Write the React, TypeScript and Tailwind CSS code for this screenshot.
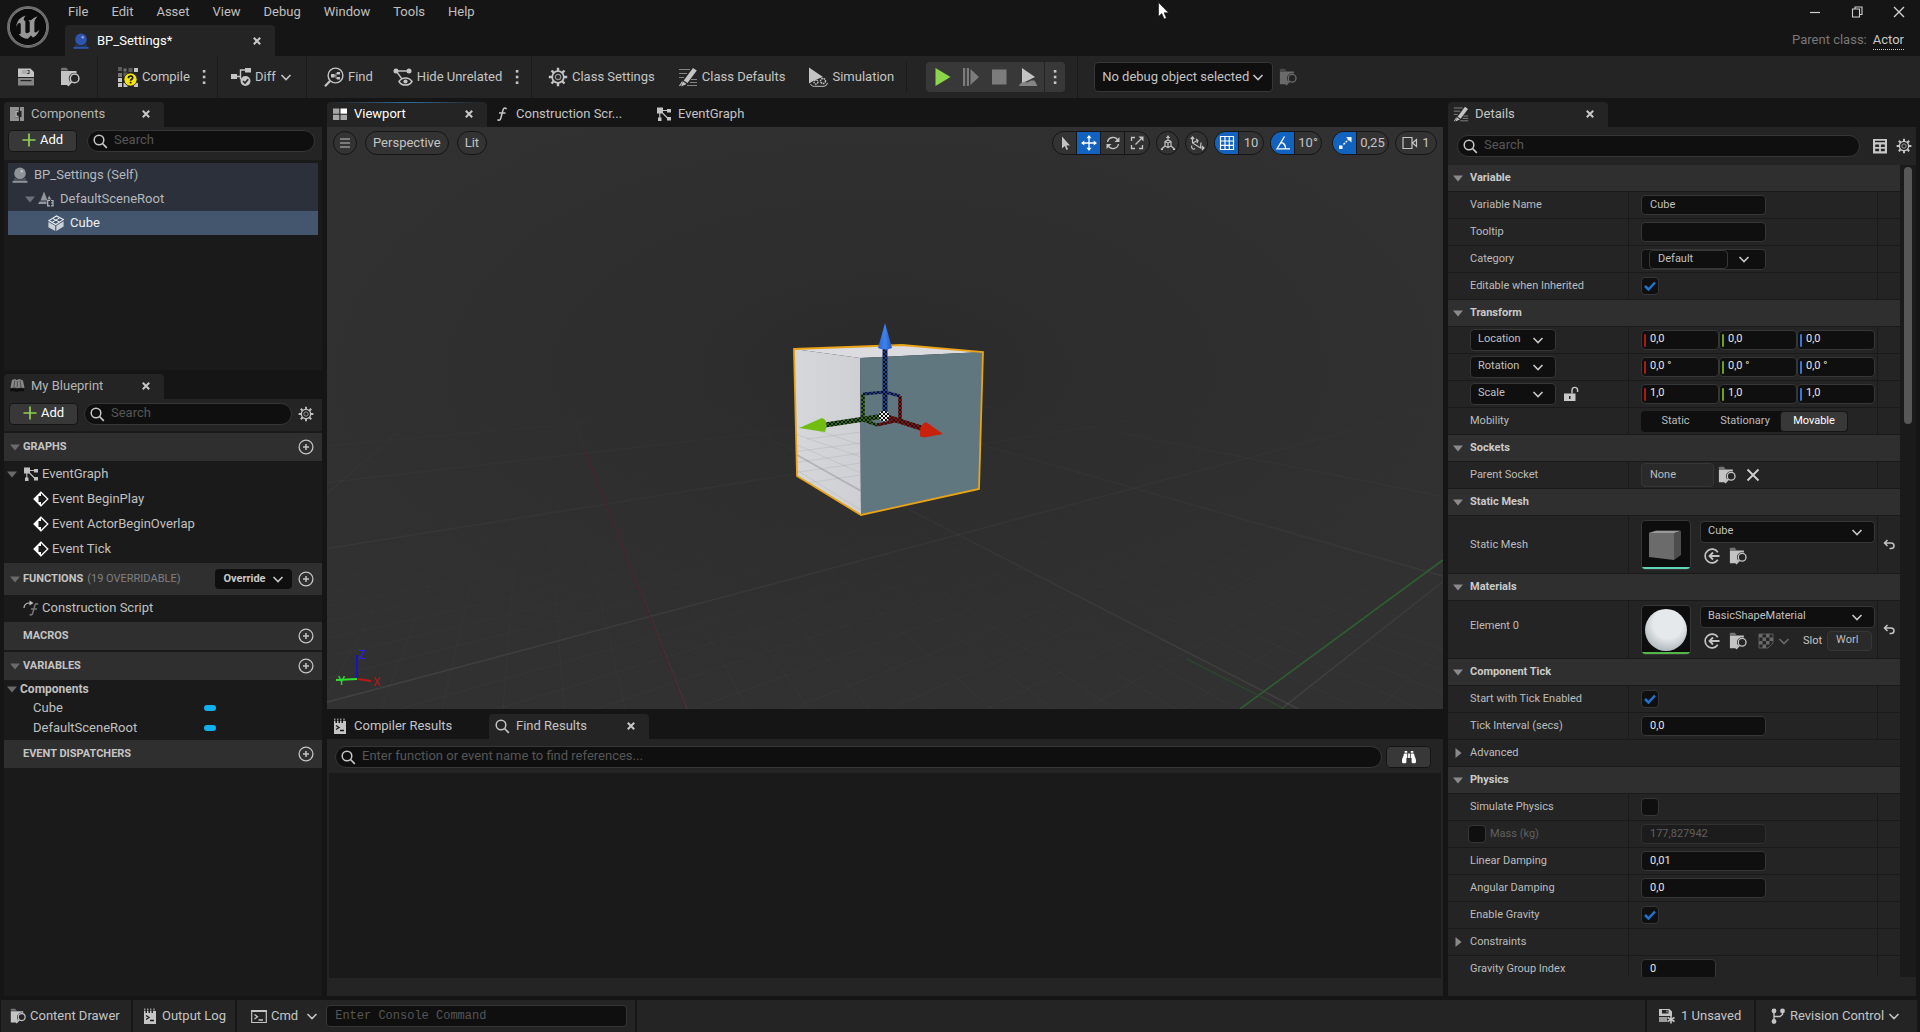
import React from "react";
import { SiUnrealengine } from "react-icons/si";
import { FaBinoculars } from "react-icons/fa";

type IconProps = { className?: string };

function Svg({ className = "size-5", box = 20, children }: { className?: string; box?: number; children: React.ReactNode }) {
  return (
    <svg viewBox={`0 0 ${box} ${box}`} className={`shrink-0 ${className}`} fill="currentColor" aria-hidden="true">
      {children}
    </svg>
  );
}

const stroke = { fill: "none", stroke: "currentColor" } as const;

const Chevron = ({ className = "size-3" }: IconProps) => (
  <Svg box={12} className={className}>
    <path d="M1.500 4L6 8.500 10.500 4" {...stroke} strokeWidth="1.600" />
  </Svg>
);
const Dots = ({ className = "size-5" }: IconProps) => (
  <Svg className={className}>
    <rect x="8.8" y="3" width="2.6" height="2.6" />
    <rect x="8.8" y="8.7" width="2.6" height="2.6" />
    <rect x="8.8" y="14.4" width="2.6" height="2.6" />
  </Svg>
);
const Cross = ({ className = "size-2.5" }: IconProps) => (
  <Svg box={10} className={className}>
    <path d="M1.8 1.8l6.4 6.4M8.2 1.8L1.8 8.2" {...stroke} strokeWidth="2" />
  </Svg>
);
const ThinCross = ({ className = "size-4" }: IconProps) => (
  <Svg box={16} className={className}>
    <path d="M2.500 2.500l11 11M13.500 2.500l-11 11" {...stroke} strokeWidth="1.800" />
  </Svg>
);
const Lens = ({ className = "size-4" }: IconProps) => (
  <Svg box={16} className={className}>
    <circle cx="7" cy="7" r="4.8" {...stroke} strokeWidth="1.5" />
    <path d="M10.5 10.5l4.3 4.3" {...stroke} strokeWidth="1.7" />
  </Svg>
);
const Save = ({ className = "size-5" }: IconProps) => (
  <Svg className={className}>
    <path fillRule="evenodd" d="M2 1.5h12.5L18 5v5H2zM6 3v4h7.5V3zM11 3.6h1.6v2.6H11z" />
    <path d="M6 3h5v4H6z" opacity=".85" />
    <path d="M2 11h16v7.5H2z" opacity=".6" />
    <path d="M4.5 13h11v1.2h-11z" fill="#242424" />
  </Svg>
);
const Browse = ({ className = "size-5" }: IconProps) => (
  <Svg className={className}>
    <path d="M1 1.500C1 1 2 .8 3 .8h3.500L8.500 3.500H1z" opacity=".5" />
    <path d="M1 4h15.5v2.200a5.600 5.600 0 0 0-6.400 8.700L8 18H1z" />
    <circle cx="14.600" cy="11.400" r="4.300" {...stroke} strokeWidth="1.500" />
    <path d="M11.600 14.600L7.800 18.800" {...stroke} strokeWidth="1.800" />
  </Svg>
);
const Compile = ({ className = "size-5" }: IconProps) => (
  <Svg className={className}>
    <path d="M0 0h4v4H0zM5.5 5.500h4v4h-4zM10.500 1h4v4h-4z" opacity=".35" />
    <path d="M0 6h4v4H0zM5.500 1.500h3v3h-3z" opacity=".5" />
    <path d="M16 1h4v4h-4zM0 11h4v4H0zM0 16h4v4H0zM5.500 16h4v4h-4zM16 16h4v4h-4z" />
    <circle cx="12.500" cy="12.500" r="6.600" fill="#f4e409" stroke="#1a1a1a" strokeWidth=".8" />
    <path d="M10.400 11.200c0-2.900 4.300-2.900 4.300-.4 0 1.500-2.100 1.500-2.100 3" fill="none" stroke="#1a1a1a" strokeWidth="1.700" />
    <path d="M11.700 14.800h1.800v1.600h-1.800z" fill="#1a1a1a" />
  </Svg>
);
const Diff = ({ className = "size-5" }: IconProps) => (
  <Svg className={className}>
    <path d="M0 7h6v5H0zM14 1h6v4.500h-6z" />
    <path d="M6 9.500h3.500V3H14M9.500 9.500v3" {...stroke} strokeWidth="1.400" />
    <circle cx="14.500" cy="14" r="5" />
    <path d="M12 14l2 2 3.200-3.800" fill="none" stroke="#242424" strokeWidth="1.600" />
  </Svg>
);
const Find = ({ className = "size-5" }: IconProps) => (
  <Svg className={className}>
    <circle cx="11.500" cy="8.500" r="7.400" {...stroke} strokeWidth="1.400" />
    <path d="M6 14L1 19.200" {...stroke} strokeWidth="2.200" />
    <path d="M7 7h3.500v3.500H7zM13 5h3v2.600h-3zM13 10h3v2.600h-3z" />
    <path d="M10 8.800h2V6.300h1.500M12 8.800v2.500h1.500" {...stroke} strokeWidth=".8" />
  </Svg>
);
const HideUnrelated = ({ className = "size-5" }: IconProps) => (
  <Svg className={className}>
    <circle cx="3" cy="4" r="2.500" />
    <circle cx="16" cy="4" r="2.500" />
    <path d="M3 4h13M3.500 4.500L9 12" {...stroke} strokeWidth="1.300" />
    <path d="M6 14.500c3-4.800 10-4.800 13 0-3 4.800-10 4.800-13 0z" {...stroke} strokeWidth="1.500" />
    <circle cx="12.500" cy="14.500" r="2.100" />
  </Svg>
);
const Gear = ({ className = "size-5" }: IconProps) => (
  <Svg className={className}>
    <circle cx="10" cy="10" r="5.800" {...stroke} strokeWidth="1.700" />
    <circle cx="10" cy="10" r="2.700" {...stroke} strokeWidth="1.200" opacity=".7" />
    <path
      d="M10 .8v3.400M10 15.800v3.400M.8 10h3.400M15.800 10h3.400M3.500 3.500l2.400 2.400M14.100 14.100l2.400 2.400M16.500 3.500l-2.400 2.400M5.900 14.100l-2.400 2.400"
      {...stroke}
      strokeWidth="2.400"
    />
  </Svg>
);
const Pencil = ({ className = "size-5" }: IconProps) => (
  <Svg className={className}>
    <path d="M1 2.500h11M1 6.500h8M1 10.500h5M13 12.500h6M12 15.500h7M9 18.500h10" {...stroke} strokeWidth="1.200" opacity=".6" />
    <path d="M15 1l3.800 2.600L9.500 16 5.700 13.400z" />
    <path d="M5 14.500l3.600 2.500L3 19.500z" />
    <path d="M4.500 14.500L1.500 19" {...stroke} strokeWidth="1.200" />
  </Svg>
);
const Simulation = ({ className = "size-5" }: IconProps) => (
  <Svg className={className}>
    <path d="M1 .5l14 9.500-4 1.500-5 2-5 3z" />
    <circle cx="8" cy="15" r="2" {...stroke} strokeWidth="1.400" strokeDasharray="1.500 .7" />
    <circle cx="15" cy="14" r="2.500" {...stroke} strokeWidth="1.500" strokeDasharray="1.700 .7" />
    <path d="M2.500 17c1 2 2 2.300 4 2.300h9.500a4 4 0 0 0 3.500-3.500" {...stroke} strokeWidth="1" />
  </Svg>
);
const Sphere = ({ className = "size-4", color = "currentColor" }: IconProps & { color?: string }) => (
  <Svg box={16} className={className}>
    <g fill={color}>
      <circle cx="8" cy="6.400" r="5.800" />
      <path d="M3 10.500c2 3 8 3 10 0l2 4.500H1z" fillOpacity=".4" />
      <path d="M.5 14h15v1.800H.5z" />
    </g>
    <circle cx="9.800" cy="4.300" r="1.300" fill="#fff" opacity=".45" />
  </Svg>
);
const ComponentsIcon = ({ className = "size-4" }: IconProps) => (
  <Svg box={16} className={className}>
    <path d="M1 1h9v3.500H6.500v7H10V15H1zM11 1h4v14h-4v-4h1.500V5H11z" opacity=".75" />
    <path d="M9.500 5.500H7v5h2.500" fill="none" stroke="currentColor" strokeWidth="1.500" />
  </Svg>
);
const ViewportIcon = ({ className = "size-4" }: IconProps) => (
  <Svg box={16} className={className}>
    <path d="M1 2.500h6.300v5.200H1zM1 8.700h6.300v5.200H1zM8.500 8.700H15v5.200H8.500z" opacity=".6" />
    <path d="M8.500 2.500H15v5.200H8.500z" fill="#fff" />
  </Svg>
);
const FunctionIcon = ({ className = "size-4" }: IconProps) => (
  <Svg box={16} className={className}>
    <path d="M12.500 3.200C11.800 1.400 9.600 1.700 9 4L6.800 12.300c-.5 2-2.300 2.600-3.300 1.200M5 7h6.500" {...stroke} strokeWidth="1.500" />
  </Svg>
);
const OverrideFunction = ({ className = "size-4" }: IconProps) => (
  <Svg box={16} className={className}>
    <path d="M1 8c0-4 2-5 6-5" {...stroke} strokeWidth="1.200" />
    <path d="M6.500.5L10.500 3 6.500 5.500z" />
    <path d="M15 4.500c-1-1.300-2.700-.9-3.200 1L9.800 13c-.4 1.900-2 2.500-3.200 1.300M8 9h6" {...stroke} strokeWidth="1.500" opacity=".55" />
  </Svg>
);
const GraphIcon = ({ className = "size-4" }: IconProps) => (
  <Svg box={16} className={className}>
    <path d="M1 1.500h6v6H1zM11 3h4v3.500h-4zM11 11h4v3.500h-4zM2 11.500h3.500V15H2z" />
    <path d="M7 4.500h4M6.500 7l5.500 5.500M3.800 7v5" {...stroke} strokeWidth="1.100" />
  </Svg>
);
const BookIcon = ({ className = "size-4" }: IconProps) => (
  <Svg box={16} className={className}>
    <path d="M1.500 10L3 2l3-1 1.500 1 3-1L14 2.500 15.500 10l-3.700-.6-3 .6-3.300-.6z" opacity=".7" />
    <path d="M5.700 2.500L5 9M8.300 3v6M11 2.500l1 6.500" fill="none" stroke="#242424" strokeWidth=".6" />
    <path d="M1 11l4-.6 3 .8 3-.8 4 .6v2.200H9l-1 1H6.500l-.7-1H1z" fill="#0d0d0d" />
  </Svg>
);
const SceneRoot = ({ className = "size-4" }: IconProps) => (
  <Svg box={16} className={className}>
    <path d="M6 .5L9.500 9.500h-7zM0 13h8.500v-2.500h-7zM11 4.500L13.500 8.500h-4z" opacity=".75" />
    <path d="M12 9.500H9.700v5.300H12M13 9.500h2v5.300h-2M13 12h2" {...stroke} strokeWidth="1.200" />
  </Svg>
);
const MeshIcon = ({ className = "size-4" }: IconProps) => (
  <Svg box={16} className={className}>
    <path d="M.8 5.600L8.500 1l6.900 3.600L7.700 9.500z" {...stroke} strokeWidth="1.100" />
    <path d="M4.500 3.400l7 3.700M11.800 2.800L4 7.400" {...stroke} strokeWidth="1" />
    <path d="M.4 7l6.800 3.800V16L.4 12.200zM8.300 10.800l7.300-4.600v5.200L8.300 16z" opacity=".8" />
  </Svg>
);
const EventIcon = ({ className = "size-4" }: IconProps) => (
  <Svg box={16} className={className}>
    <path d="M8 1.200L14.800 8 8 14.800 1.200 8z" {...stroke} strokeWidth="1.300" />
    <path d="M8 .5L.5 8 8 15.500V11H5.500V5H8z" />
    <path d="M8 5l3.200 3L8 11z" fill="#1a1a1a" />
  </Svg>
);
const CirclePlus = ({ className = "size-4" }: IconProps) => (
  <Svg box={16} className={className}>
    <circle cx="8" cy="8" r="6.900" {...stroke} strokeWidth="1.300" />
    <path d="M8 5v6M5 8h6" {...stroke} strokeWidth="1.500" />
  </Svg>
);
const LogIcon = ({ className = "size-4" }: IconProps) => (
  <Svg box={16} className={className}>
    <path d="M2 3h1.500v2H5V3h1.500v2H8V3h1.500v2H11V3h3v13H2z" />
    <path d="M2.800.5v2M5.800.5v2M8.800.5v2M12 .5v2" {...stroke} strokeWidth="1" />
    <path d="M4 7.500l3 2-3 2M8 12.500h4" fill="none" stroke="#1a1a1a" strokeWidth="1.300" />
  </Svg>
);
const CmdIcon = ({ className = "size-4" }: IconProps) => (
  <Svg box={16} className={className}>
    <path d="M.7 2.500h14.600v12H.7z" {...stroke} strokeWidth="1.200" />
    <path d="M.5 2h15v2H.5z" />
    <path d="M3.500 6.500l3 2.200-3 2.200M7.500 12h4.500" {...stroke} strokeWidth="1.300" />
  </Svg>
);
const UnsavedIcon = ({ className = "size-4" }: IconProps) => (
  <Svg box={16} className={className}>
    <path fillRule="evenodd" d="M0 1h10.500L13 3.500V8H0zM3 2v3.500h6.500V2zM7.500 2.500h1v2h-1z" />
    <path d="M0 9h8v5H0z" opacity=".75" />
    <path d="M12 7.500v8M8.500 9.500l7 4M15.500 9.500l-7 4" {...stroke} strokeWidth="1.600" />
  </Svg>
);
const BranchIcon = ({ className = "size-4" }: IconProps) => (
  <Svg box={16} className={className}>
    <circle cx="4" cy="3" r="2.400" />
    <circle cx="4" cy="13.500" r="2.400" />
    <circle cx="12.500" cy="3" r="2.400" />
    <path d="M4 3v10M12.500 3v3.500L10 8.500H4" {...stroke} strokeWidth="1.400" />
  </Svg>
);
const UseAsset = ({ className = "size-4" }: IconProps) => (
  <Svg box={16} className={className}>
    <path d="M13.800 4.200A6.900 6.900 0 1 0 13.800 11.800" {...stroke} strokeWidth="1.700" />
    <path d="M15.500 8H6M9 4.500L5.500 8 9 11.500" {...stroke} strokeWidth="1.800" />
  </Svg>
);
const ResetArrow = ({ className = "size-3" }: IconProps) => (
  <Svg box={12} className={className}>
    <path d="M4.500 1L1.500 4l3 3M1.500 4H8c4 0 4 5.500 0 5.500H6.500" {...stroke} strokeWidth="1.500" />
  </Svg>
);
const Unlock = ({ className = "size-4" }: IconProps) => (
  <Svg box={16} className={className}>
    <path fillRule="evenodd" d="M1 7.500h11.500V15H1zM6 10v3h1.500v-3z" />
    <path d="M9 7.500V4.200a2.800 2.800 0 0 1 5.600 0V6" {...stroke} strokeWidth="1.400" />
  </Svg>
);
const TableIcon = ({ className = "size-4" }: IconProps) => (
  <Svg box={16} className={className}>
    <path fillRule="evenodd" d="M1 1h14v14.500H1zM3 2.800v1.400h10V2.800zM3.200 6.500V9h3.900V6.500zM8.900 6.500V9h3.900V6.500zM3.200 10.800v2.500h3.900v-2.500zM8.900 10.800v2.500h3.900v-2.500z" />
  </Svg>
);
const CheckerIcon = ({ className = "size-4" }: IconProps) => (
  <Svg box={16} className={className}>
    <path d="M1 1h3.500v3.500H1zM8 1h3.500v3.500H8zM4.500 4.500H8V8H4.500zM11.500 4.500H15V8h-3.500zM1 8h3.500v3.500H1zM8 8h3.500v3.500H8zM4.500 11.500H8V15H4.500z" />
    <path d="M1 1h14v9l-5 5H1z" {...stroke} strokeWidth=".8" />
  </Svg>
);

const TriDown = ({ className = "text-[#8a8a8a]" }: IconProps) => (
  <Svg box={10} className={`size-2.5 ${className}`}>
    <path d="M0 2.500h10L5 8.500z" />
  </Svg>
);
const TriRight = () => (
  <Svg box={10} className="size-2.5 text-[#8a8a8a]">
    <path d="M2.500 0v10l6-5z" />
  </Svg>
);

function Tab({ icon, label, active, closable, glow, dim }: { icon: React.ReactNode; label: string; active?: boolean; closable?: boolean; glow?: boolean; dim?: boolean }) {
  return (
    <div
      className={`relative flex h-[25px] w-40 shrink-0 items-center pb-0.5 pl-[5px] pr-[13px] ${active ? "rounded-t bg-[#242424]" : ""} ${
        dim ? "text-[#b4b4b4]" : glow ? "text-white" : "text-[#c4c4c4]"
      }`}
    >
      {glow && <span className="absolute inset-x-2 top-0 h-px bg-linear-to-r from-transparent via-[#2f6f9f] to-transparent" />}
      <button type="button" className="flex min-w-0 flex-1 items-center gap-1.5 text-left">
        {icon}
        <span className="truncate">{label}</span>
      </button>
      {closable && (
        <button type="button" aria-label={`Close ${label}`} className="text-[#c8c8c8]">
          <Cross />
        </button>
      )}
    </div>
  );
}

function SearchBox({ placeholder, className = "" }: { placeholder: string; className?: string }) {
  return (
    <label className={`flex h-[22px] min-w-0 flex-1 items-center gap-1.5 rounded-full border border-[#363636] bg-[#0f0f0f] pl-1 text-[#c8c8c8] ${className}`}>
      <Lens />
      <input aria-label={placeholder} placeholder={placeholder} className="min-w-0 flex-1 bg-transparent pb-0.5 text-[13px] outline-none placeholder:text-[#565656]" />
    </label>
  );
}

function AddButton() {
  return (
    <button type="button" className="flex h-[22px] w-[69px] shrink-0 items-center justify-center gap-1 rounded border border-[#151515] bg-[#383838] pb-0.5 text-white">
      <Svg box={14} className="size-3.5 text-[#8fd14f]">
        <path d="M7 .5v13M.5 7h13" {...stroke} strokeWidth="1.700" />
      </Svg>
      Add
    </button>
  );
}

function ComponentsPanel() {
  return (
    <section className="flex h-[268px] shrink-0 flex-col">
      <div className="flex">
        <Tab icon={<ComponentsIcon />} label="Components" active closable dim />
      </div>
      <div className="flex h-[33px] items-start gap-2.5 bg-[#242424] pl-1 pt-[3px] pr-[7px]">
        <AddButton />
        <SearchBox placeholder="Search" />
      </div>
      <div className="flex-1 bg-[#1a1a1a] px-1 pt-[3px] text-[#b4b8be]">
        <div className="flex h-6 items-center gap-1.5 bg-[#2b303a] pl-1">
          <Sphere color="#8e9299" />
          BP_Settings (Self)
        </div>
        <div className="flex h-6 items-center bg-[#2b303a] pl-[17px]">
          <TriDown className="text-[#6a6f78]" />
          <SceneRoot className="ml-[3px] mr-1.5 size-4" />
          DefaultSceneRoot
        </div>
        <div className="flex h-6 items-center gap-1.5 bg-[#43566d] pl-10 text-[#eef0f2]">
          <MeshIcon />
          Cube
        </div>
      </div>
    </section>
  );
}

function BlueprintHeader({ label, suffix, arrow, children, className = "h-7" }: { label: string; suffix?: string; arrow?: boolean; children?: React.ReactNode; className?: string }) {
  return (
    <div className={`flex items-center bg-[#2f2f2f] pl-1.5 pr-2 text-[11px] ${className}`}>
      <span className="w-[13px]">{arrow && <TriDown className="text-[#6a6a6a]" />}</span>
      <span className="font-bold text-[#c4c4c4]">{label}</span>
      {suffix && <span className="ml-1 text-[#808080]">{suffix}</span>}
      <span className="flex-1" />
      {children}
      <button type="button" aria-label={`Add to ${label}`} className="ml-1.5 text-[#c4c4c4]">
        <CirclePlus />
      </button>
    </div>
  );
}

function MyBlueprintPanel() {
  return (
    <section className="mt-1 flex min-h-0 flex-1 flex-col bg-[#1a1a1a] text-[#c0c0c0]">
      <div className="flex bg-[#151515]">
        <Tab icon={<BookIcon />} label="My Blueprint" active closable dim />
      </div>
      <div className="flex h-8 items-start gap-1.5 bg-[#242424] pl-[5px] pr-2 pt-1">
        <AddButton />
        <SearchBox placeholder="Search" />
        <button type="button" aria-label="View options" className="mt-[3px]">
          <Gear className="size-4" />
        </button>
      </div>
      <div className="mt-0.5">
        <BlueprintHeader label="GRAPHS" arrow />
        <div className="flex h-[25px] items-center pl-[3px]">
          <TriDown className="text-[#6a6a6a]" />
          <GraphIcon className="ml-1.5 mr-[3px] size-4" />
          EventGraph
        </div>
        {["Event BeginPlay", "Event ActorBeginOverlap", "Event Tick"].map((e) => (
          <div key={e} className="flex h-[25px] items-center gap-[3px] pl-[29px]">
            <EventIcon className="size-4 text-white" />
            {e}
          </div>
        ))}
        <BlueprintHeader label="FUNCTIONS" suffix="(19 OVERRIDABLE)" arrow className="mt-0.5 h-8">
          <button type="button" className="flex h-5 w-[77px] items-center justify-center gap-1.5 rounded bg-[#0f0f0f] font-bold text-[#c8c8c8]">
            Override
            <Chevron />
          </button>
        </BlueprintHeader>
        <div className="flex h-[27px] items-center gap-[3px] pb-0.5 pl-[19px]">
          <OverrideFunction />
          Construction Script
        </div>
        <BlueprintHeader label="MACROS" />
        <BlueprintHeader label="VARIABLES" arrow className="mt-0.5 h-7" />
        <div className="flex h-[19px] items-center gap-[3px] pb-0.5 pl-[3px] text-xs font-bold">
          <TriDown className="text-[#6a6a6a]" />
          Components
        </div>
        {["Cube", "DefaultSceneRoot"].map((v) => (
          <div key={v} className="flex h-5 items-center pb-0.5 pl-[29px]">
            <span className="w-[171px]">{v}</span>
            <span className="h-1.5 w-3 rounded-full bg-[#12b0ef]" />
          </div>
        ))}
        <BlueprintHeader label="EVENT DISPATCHERS" className="mt-px h-7" />
      </div>
    </section>
  );
}

/* Floor lines run towards two vanishing points; steps are horizontal shift per pixel of depth. */
const HORIZON = 190;
const floorLines = (vx: number, base: number, step: number, from: number, to: number) =>
  Array.from({ length: to - from }, (_, i) => {
    const k = from + i;
    return { key: k, x1: vx, x2: vx + (base + step * k) * 500, major: k % 10 === 0 };
  });

function Scene() {
  const lines = [...floorLines(206, 0.392, 0.156, -26, 40), ...floorLines(1452, -3.77, 0.25, -30, 16)];
  return (
    <svg className="absolute inset-0 size-full" viewBox="0 0 1116 582" preserveAspectRatio="xMidYMid slice" aria-label="3D preview">
      <defs>
        <radialGradient id="bg" cx="0.5" cy="0.42" r="0.6">
          <stop offset="0" stopColor="#2a2a2a" />
          <stop offset="0.35" stopColor="#2e2e2e" />
          <stop offset="1" stopColor="#313131" />
        </radialGradient>
        <linearGradient id="fade" x1="0" y1="0" x2="0" y2="1">
          <stop offset="0.42" stopColor="#000" />
          <stop offset="0.75" stopColor="#777" />
          <stop offset="1" stopColor="#fff" />
        </linearGradient>
        <linearGradient id="left" x1="0" y1="0" x2="1" y2="0">
          <stop offset="0" stopColor="#d6d7da" />
          <stop offset="1" stopColor="#cfd0d3" />
        </linearGradient>
        <linearGradient id="cone" x1="0" y1="0" x2="1" y2="0">
          <stop offset="0" stopColor="#2b66cf" />
          <stop offset="0.5" stopColor="#3f82ee" />
          <stop offset="1" stopColor="#2257b8" />
        </linearGradient>
        <mask id="floor">
          <rect width="1116" height="582" fill="url(#fade)" />
        </mask>
        <clipPath id="leftFace">
          <path d="M467 222L533 231L534 388L470 349z" />
        </clipPath>
        {[
          ["checkBlue", "#1d3f9c"],
          ["checkGreen", "#2f6b12"],
          ["checkRed", "#8f1010"],
          ["checkWhite", "#e8e8e8"],
        ].map(([id, color]) => (
          <pattern key={id} id={id} width="4" height="4" patternUnits="userSpaceOnUse">
            <rect width="4" height="4" fill="#101010" />
            <path d="M0 0h2v2H0zM2 2h2v2H2z" fill={color} />
          </pattern>
        ))}
      </defs>
      <rect width="1116" height="582" fill="url(#bg)" />
      <g mask="url(#floor)">
        {lines.map((l) => (
          <line key={`${l.x1}-${l.key}`} x1={l.x1} y1={HORIZON} x2={l.x2} y2={HORIZON + 500} stroke="#fff" strokeWidth={l.major ? 1.5 : 1} strokeOpacity={l.major ? 0.08 : 0.028} />
        ))}
      </g>
      <path d="M258 323L359 582" stroke="#4a2329" strokeWidth="1.200" />
      <path d="M1116 433L913 582" stroke="#2f5f30" strokeWidth="1.600" />
      <path d="M860 532L958 582" stroke="#2c4a2d" strokeWidth="1.200" />

      <path d="M467 222L575 218L656 225L533 231z" fill="#dcdce0" />
      <path d="M467 222L533 231L534 388L470 349z" fill="url(#left)" />
      <path d="M533 231L656 225L652 362L534 388z" fill="#61777f" />
      <g clipPath="url(#leftFace)" stroke="#9b9da0" strokeOpacity="0.25">
        <path d="M470 328L534 364" strokeWidth="1.600" strokeOpacity="0.6" />
        <path d="M468 317L534 346M468 307L534 330M480 300L534 318M468 342L534 383M466 346L534 336M466 336L534 326M466 325L534 316M466 358L534 348M480 312L534 305" />
      </g>
      <path d="M467 222L575 218L656 225L652 362L534 388L470 349z" fill="none" stroke="#e8a317" strokeWidth="1.800" />

      <g fill="none">
        <path d="M536 293V267" stroke="url(#checkGreen)" strokeWidth="3.500" />
        <path d="M573 293V269" stroke="url(#checkRed)" strokeWidth="3.500" />
        <path d="M536 267L558 265L573 269" stroke="url(#checkBlue)" strokeWidth="3" />
        <path d="M536 293L550 298" stroke="url(#checkGreen)" strokeWidth="3" />
        <path d="M550 298L573 293" stroke="url(#checkRed)" strokeWidth="3" />
        <path d="M558 289V221.500L558.100 220" stroke="url(#checkBlue)" strokeWidth="5" />
        <path d="M557 289L498 298" stroke="url(#checkGreen)" strokeWidth="5" />
        <path d="M557 289L597 302" stroke="url(#checkRed)" strokeWidth="5" />
      </g>
      <path d="M558 196L565 221Q558 224 551 221z" fill="url(#cone)" />
      <path d="M472 301L495 291Q502 293 498 305z" fill="#72bd12" />
      <path d="M616 307L599 295Q592 297 593 309Q595 311 600 310z" fill="#c9220c" />
      <circle cx="557" cy="289" r="5.500" fill="url(#checkWhite)" />

      <g fill="none" strokeWidth="1.800">
        <path d="M30 551V528" stroke="#1410d8" />
        <path d="M30 552L9 553" stroke="#30e030" />
        <path d="M31 552L44 554" stroke="#c01818" />
      </g>
      <g fontFamily="Roboto, sans-serif" fontSize="12">
        <text x="32" y="532" fill="#2420f0">Z</text>
        <text x="11" y="558" fill="#30e030">Y</text>
        <text x="46" y="559" fill="#b01818">X</text>
      </g>
    </svg>
  );
}

const pill = "flex h-6 shrink-0 items-center justify-center overflow-hidden rounded-full border border-[#151515] bg-[#333333] text-[#c4c4c4]";

function ViewportToolbar() {
  return (
    <div className="relative flex items-center gap-1.5 px-1.5 pt-1">
      <button type="button" aria-label="Viewport options" className={`${pill} w-6`}>
        <Svg box={12} className="size-3">
          <path d="M1 2h10M1 6h10M1 10h10" {...stroke} strokeWidth="1.100" />
        </Svg>
      </button>
      <button type="button" className={`${pill} ml-0.5 px-[7px]`}>Perspective</button>
      <button type="button" className={`${pill} ml-0.5 px-[7px]`}>Lit</button>
      <span className="flex-1" />
      <div className={`${pill} divide-x divide-[#151515]`}>
        <button type="button" aria-label="Select" className="flex h-6 w-6 items-center justify-center">
          <Svg box={16} className="size-4"><path d="M5 1.500v12l2.800-2.600L9.500 15l1.600-.8-1.700-3.800h3.600z" /></Svg>
        </button>
        <button type="button" aria-label="Translate" className="flex h-6 w-6 items-center justify-center bg-[#1262bf] text-white">
          <Svg box={16} className="size-4">
            <path d="M8 1.500v13M1.500 8h13" {...stroke} strokeWidth="1.300" />
            <path d="M8 0l2.500 3.300h-5zM8 16l2.500-3.300h-5zM0 8l3.300-2.500v5zM16 8l-3.300-2.500v5z" />
          </Svg>
        </button>
        <button type="button" aria-label="Rotate" className="flex h-6 w-6 items-center justify-center">
          <Svg box={16} className="size-4">
            <path d="M2.500 7A5.600 5.600 0 0 1 13 5.500M13.500 9A5.600 5.600 0 0 1 3 10.500" {...stroke} strokeWidth="1.300" />
            <path d="M14.500 2v5h-5zM1.500 14V9h5z" />
          </Svg>
        </button>
        <button type="button" aria-label="Scale" className="flex h-6 w-6 items-center justify-center">
          <Svg box={16} className="size-4">
            <path d="M2.500 6V2.500H6M13.500 10v3.500H10M2.500 10v3.500H6" {...stroke} strokeWidth="1.300" />
            <path d="M6.500 9.500L12 4" {...stroke} strokeWidth="1.300" />
            <path d="M9.500 1.500h5v5z" />
          </Svg>
        </button>
      </div>
      <button type="button" aria-label="World space" className={`${pill} w-[23px]`}>
        <Svg box={16} className="size-4">
          <path d="M8 .5V6M5 6.500l3-1.500 3 1.500v4.500l-3 1.500L5 11zM5 6.500L8 8l3-1.500M8 8v4.500M5 11l-4 3.500M11 11l4 3.500M8 1L6.500 3M8 1l1.500 2M1 14.500h2M15 14.500h-2" {...stroke} strokeWidth="1.200" />
        </Svg>
      </button>
      <button type="button" aria-label="Surface snapping" className={`${pill} w-[23px]`}>
        <Svg box={16} className="size-4">
          <path d="M3.500 2v6l8 5H15M3.500 8l5-2.500M11.500 13l.5-5.500M1.800 4L3.500 2l1.700 2M13 11l2 2-2 2M7 4l2 1.500L8 8" {...stroke} strokeWidth="1.200" />
          <path d="M3 10.500c-1.500 2 1 4.500 3 3" {...stroke} strokeWidth="1.200" />
        </Svg>
      </button>
      <div className={`${pill} divide-x divide-[#151515]`}>
        <button type="button" aria-label="Grid snapping" className="flex h-6 w-6 items-center justify-center bg-[#1262bf] text-white">
          <Svg box={16} className="size-4"><path d="M1.500 1.500h13v13h-13zM1.500 6h13M1.500 10.300h13M6 1.500v13M10.300 1.500v13" {...stroke} strokeWidth="1.200" /></Svg>
        </button>
        <button type="button" className="h-6 w-6">10</button>
      </div>
      <div className={`${pill} divide-x divide-[#151515]`}>
        <button type="button" aria-label="Rotation snapping" className="flex h-6 w-6 items-center justify-center bg-[#1262bf] text-white">
          <Svg box={16} className="size-4"><path d="M9.500 1.500L2 13.800h13M6 7.500c3 .5 4.500 3 4.500 6" {...stroke} strokeWidth="1.300" /></Svg>
        </button>
        <button type="button" className="h-6 w-[26px]">10°</button>
      </div>
      <div className={`${pill} ml-1 divide-x divide-[#151515]`}>
        <button type="button" aria-label="Scale snapping" className="flex h-6 w-6 items-center justify-center bg-[#1262bf] text-white">
          <Svg box={16} className="size-4">
            <path d="M2 10.500h3.500V14H2zM9 2h5.500v5.500z" />
            <path d="M6.500 9.500L12 4" {...stroke} strokeWidth="1.400" strokeDasharray="2 1" />
          </Svg>
        </button>
        <button type="button" className="h-6 w-[31px]">0,25</button>
      </div>
      <button type="button" aria-label="Camera speed" className={`${pill} w-[42px] gap-1`}>
        <Svg box={16} className="size-4"><path d="M1 2.500h9v11H1zM10.500 8l4-3.500v7z" {...stroke} strokeWidth="1.200" /></Svg>
        1
      </button>
    </div>
  );
}

function CenterColumn() {
  return (
    <main className="flex min-w-0 flex-1 flex-col">
      <div className="flex gap-0.5">
        <Tab icon={<ViewportIcon />} label="Viewport" active closable glow />
        <Tab icon={<FunctionIcon />} label="Construction Scr..." />
        <Tab icon={<GraphIcon />} label="EventGraph" />
      </div>
      <div className="relative min-h-0 flex-1 overflow-hidden bg-[#303030]">
        <Scene />
        <ViewportToolbar />
      </div>
      <div className="mt-[5px] flex gap-0.5">
        <Tab icon={<LogIcon />} label="Compiler Results" />
        <Tab icon={<Lens />} label="Find Results" active closable />
      </div>
      <section className="flex h-[257px] flex-col bg-[#242424]">
        <div className="flex items-center gap-1 pb-[5px] pl-2 pr-3 pt-[7px]">
          <SearchBox placeholder="Enter function or event name to find references..." />
          <button type="button" aria-label="Find in all blueprints" className="flex h-[22px] w-[45px] items-center justify-center rounded border border-[#151515] bg-[#383838] text-white">
            <FaBinoculars className="size-3.5" />
          </button>
        </div>
        <div className="mx-0.5 mb-[18px] flex-1 bg-[#1a1a1a]" />
      </section>
    </main>
  );
}

function Category({ label }: { label: string }) {
  return (
    <h3 className="flex h-[27px] items-center gap-[7px] border-b border-[#1a1a1a] bg-[#2f2f2f] pl-[5px] font-bold text-[#cacaca]">
      <TriDown />
      {label}
    </h3>
  );
}

function Row({ label, arrow, plain, tall, dim, reset, children, id }: {
  label: React.ReactNode; arrow?: boolean; plain?: boolean; tall?: boolean; dim?: boolean; reset?: boolean; children?: React.ReactNode; id?: string;
}) {
  return (
    <div className={`grid grid-cols-[180px_1fr_23px] border-b border-[#1a1a1a] bg-[#242424] ${tall ? "h-[58px]" : "h-[27px]"}`}>
      <div className="flex items-center pl-[5px]">
        <span className="w-[17px] shrink-0">{arrow && <TriRight />}</span>
        {typeof label === "string" ? <label htmlFor={id} className={dim ? "text-[#606060]" : "text-[#bcbcbc]"}>{label}</label> : label}
      </div>
      <div className={`flex items-center pl-3 ${plain ? "" : "border-l border-[#1a1a1a]"}`}>{children}</div>
      <div className={`flex items-center justify-center text-[#c4c4c4] ${plain ? "" : "border-l border-[#1a1a1a]"}`}>
        {reset && <button type="button" aria-label="Reset to default"><ResetArrow /></button>}
      </div>
    </div>
  );
}

function Field({ id, value = "", className = "w-[125px] text-[#c0c0c0]", disabled }: { id: string; value?: string; className?: string; disabled?: boolean }) {
  return (
    <input
      id={id}
      defaultValue={value}
      disabled={disabled}
      className={`h-5 rounded border px-2 pb-0.5 outline-none ${disabled ? "border-[#303030] bg-[#1c1c1c]" : "border-[#363636] bg-[#0f0f0f]"} ${className}`}
    />
  );
}

function Check({ id, checked, label }: { id: string; checked?: boolean; label?: string }) {
  return (
    <span className="relative flex size-[18px] shrink-0">
      <input id={id} type="checkbox" defaultChecked={checked} aria-label={label} className="peer size-[18px] appearance-none rounded-sm border border-[#363636] bg-[#0f0f0f]" />
      <Svg box={16} className="pointer-events-none absolute inset-px hidden size-4 text-[#1e74d2] peer-checked:block">
        <path d="M3 8l3.500 3.500L13 4.500" {...stroke} strokeWidth="2.500" />
      </Svg>
    </span>
  );
}

function Dropdown({ label, value, className }: { label: string; value: string; className: string }) {
  return (
    <span className={`relative flex h-[22px] shrink-0 items-center rounded border border-[#363636] bg-[#0f0f0f] ${className}`}>
      <select aria-label={label} className="size-full appearance-none bg-transparent pb-0.5 pl-[7px] text-[#c0c0c0] outline-none">
        <option>{value}</option>
      </select>
      <span className="pointer-events-none absolute inset-y-0 right-[11px] flex items-center text-[#c8c8c8]">
        <Chevron />
      </span>
    </span>
  );
}

function Vector({ name, value }: { name: string; value: string }) {
  return (
    <>
      {[
        ["X", "bg-[#a81c12]"],
        ["Y", "bg-[#6aa516]"],
        ["Z", "bg-[#3a76d8]"],
      ].map(([axis, color]) => (
        <span key={axis} className="flex h-5 w-[78px] items-center rounded border border-[#363636] bg-[#0f0f0f] pl-0.5">
          <span className={`h-[13px] w-0.5 shrink-0 rounded-full ${color}`} />
          <input aria-label={`${name} ${axis}`} defaultValue={value} className="w-full min-w-0 bg-transparent pb-0.5 pl-1 text-[#e6e6e6] outline-none" />
        </span>
      ))}
    </>
  );
}

function Thumb({ accent, children }: { accent: string; children: React.ReactNode }) {
  return (
    <span className="flex size-[50px] shrink-0 flex-col overflow-hidden rounded border border-[#363636] bg-[#0d0d0d]">
      <svg viewBox="0 0 48 46" className="min-h-0 flex-1" aria-hidden="true">{children}</svg>
      <span className={`h-0.5 shrink-0 ${accent}`} />
    </span>
  );
}

function DetailsPanel() {
  return (
    <aside className="flex w-[468px] shrink-0 flex-col">
      <div className="flex">
        <Tab icon={<Pencil className="size-4" />} label="Details" active closable />
      </div>
      <div className="flex h-[38px] items-start gap-2 bg-[#242424] pl-[9px] pr-1 pt-2">
        <SearchBox placeholder="Search" className="mr-1" />
        <button type="button" aria-label="Property matrix" className="mt-[3px] text-[#c8c8c8]"><TableIcon /></button>
        <button type="button" aria-label="Details settings" className="mt-[3px] text-[#c8c8c8]"><Gear className="size-4" /></button>
      </div>
      <div className="flex min-h-0 flex-1 bg-[#1a1a1a] text-[11px]">
        <div className="min-w-0 flex-1 overflow-hidden">
          <Category label="Variable" />
          <Row label="Variable Name" id="variable-name"><Field id="variable-name" value="Cube" /></Row>
          <Row label="Tooltip" id="tooltip"><Field id="tooltip" /></Row>
          <Row label="Category" id="category">
            <span className="flex h-[21px] w-[125px] items-center gap-2.5 rounded border border-[#363636] bg-[#0f0f0f] pl-[7px]">
              <input id="category" defaultValue="Default" className="h-[19px] w-[79px] rounded border border-[#363636] bg-transparent px-2 pb-0.5 text-[#c0c0c0] outline-none" />
              <button type="button" aria-label="Choose category" className="text-[#c8c8c8]"><Chevron /></button>
            </span>
          </Row>
          <Row label="Editable when Inherited" id="editable"><Check id="editable" checked /></Row>

          <Category label="Transform" />
          <Row label={<Dropdown label="Location mode" value="Location" className="w-[86px]" />}><Vector name="Location" value="0,0" /></Row>
          <Row label={<Dropdown label="Rotation mode" value="Rotation" className="w-[86px]" />}><Vector name="Rotation" value="0,0 °" /></Row>
          <Row
            label={
              <>
                <Dropdown label="Scale mode" value="Scale" className="w-[86px]" />
                <button type="button" aria-label="Lock scale ratio" className="ml-[7px] text-[#c8c8c8]"><Unlock /></button>
              </>
            }
          >
            <Vector name="Scale" value="1,0" />
          </Row>
          <Row label="Mobility">
            <div className="flex h-[21px] rounded bg-[#0f0f0f] text-[#bcbcbc]">
              <button type="button" className="w-[69px]">Static</button>
              <button type="button" className="w-[70px]">Stationary</button>
              <button type="button" className="w-[68px] rounded border border-[#151515] bg-[#383838] text-white">Movable</button>
            </div>
          </Row>

          <Category label="Sockets" />
          <Row label="Parent Socket" id="socket">
            <input id="socket" defaultValue="None" readOnly className="h-6 w-[73px] rounded-sm border border-[#363636] bg-[#2a2a2a] px-2 pb-0.5 text-[#bcbcbc] outline-none" />
            <button type="button" aria-label="Browse socket" className="ml-1 text-[#c4c4c4]"><Browse className="size-[18px]" /></button>
            <button type="button" aria-label="Clear socket" className="ml-[9px] text-[#d0d0d0]"><ThinCross /></button>
          </Row>

          <Category label="Static Mesh" />
          <Row label="Static Mesh" tall reset>
            <Thumb accent="bg-[#5fd6b8]">
              <path d="M7 12L14 9.500h25L32 12zM7 12h25v27L7 36z" fill="#6b6b6b" />
              <path d="M32 12l7-2v24l-7 5z" fill="#4d4d4d" />
              <path d="M7 12L14 10h24l-6 2z" fill="#9a9a9a" />
            </Thumb>
            <div className="mb-1 ml-[9px] flex flex-col gap-1">
              <Dropdown label="Static mesh asset" value="Cube" className="w-[175px]" />
              <div className="flex h-[18px] items-center gap-[9px] pl-1 text-[#c4c4c4]">
                <button type="button" aria-label="Use selected asset"><UseAsset /></button>
                <button type="button" aria-label="Browse to asset"><Browse className="size-[18px]" /></button>
              </div>
            </div>
          </Row>

          <Category label="Materials" />
          <Row label={<span className="pb-2 text-[#bcbcbc]">Element 0</span>} tall reset>
            <Thumb accent="bg-[#55b548]">
              <defs>
                <radialGradient id="ball" cx="0.55" cy="0.35" r="0.7">
                  <stop offset="0.5" stopColor="#e6e9ec" />
                  <stop offset="1" stopColor="#a9b3b8" />
                </radialGradient>
              </defs>
              <circle cx="24" cy="24" r="21" fill="url(#ball)" />
            </Thumb>
            <div className="mb-1 ml-[9px] flex flex-col gap-1">
              <Dropdown label="Material asset" value="BasicShapeMaterial" className="w-[175px]" />
              <div className="flex h-[18px] items-center gap-[9px] pl-1 text-[#c4c4c4]">
                <button type="button" aria-label="Use selected material"><UseAsset /></button>
                <button type="button" aria-label="Browse to material"><Browse className="size-[18px]" /></button>
                <button type="button" aria-label="Textures" className="ml-0.5 flex items-center gap-1 text-[#6a6a6a]"><CheckerIcon /><Chevron /></button>
                <label htmlFor="slot" className="ml-1">Slot</label>
                <input id="slot" defaultValue="Worl" readOnly className="-ml-1 h-5 w-[45px] rounded-sm border border-[#363636] bg-[#2a2a2a] px-2 pb-0.5 text-[#bcbcbc] outline-none" />
              </div>
            </div>
          </Row>

          <Category label="Component Tick" />
          <Row label="Start with Tick Enabled" id="start-tick"><Check id="start-tick" checked /></Row>
          <Row label="Tick Interval (secs)" id="tick-interval"><Field id="tick-interval" value="0,0" className="w-[125px] text-[#e6e6e6]" /></Row>
          <Row label="Advanced" arrow plain />

          <Category label="Physics" />
          <Row label="Simulate Physics" id="simulate"><Check id="simulate" /></Row>
          <Row
            label={
              <span className="-ml-0.5 flex items-center gap-1">
                <Check id="mass-override" label="Override mass" />
                <label htmlFor="mass" className="text-[#606060]">Mass (kg)</label>
              </span>
            }
          >
            <Field id="mass" value="177,827942" disabled className="w-[125px] text-[#606060]" />
          </Row>
          <Row label="Linear Damping" id="linear"><Field id="linear" value="0,01" className="w-[125px] text-[#e6e6e6]" /></Row>
          <Row label="Angular Damping" id="angular"><Field id="angular" value="0,0" className="w-[125px] text-[#e6e6e6]" /></Row>
          <Row label="Enable Gravity" id="gravity"><Check id="gravity" checked /></Row>
          <Row label="Constraints" arrow />
          <Row label="Gravity Group Index" id="group"><Field id="group" value="0" className="w-[75px] text-[#e6e6e6]" /></Row>
        </div>
        <div className="w-4 shrink-0 px-1 pt-0.5">
          <div className="h-[257px] rounded-full bg-[#575757]" />
        </div>
      </div>
      <div className="h-[19px] bg-[#242424]" />
    </aside>
  );
}

function ToolButton({ icon, label, children }: { icon: React.ReactNode; label: string; children?: React.ReactNode }) {
  return (
    <button type="button" className="flex items-center gap-1 whitespace-nowrap">
      {icon}
      {label}
      {children}
    </button>
  );
}

function Toolbar() {
  return (
    <div className="flex h-[42px] shrink-0 items-center bg-[#242424] text-[#c4c4c4]">
      <div className="flex h-full w-[98px] items-center gap-6 border-r border-[#1a1a1a] pl-4">
        <button type="button" aria-label="Save"><Save /></button>
        <button type="button" aria-label="Browse"><Browse /></button>
      </div>
      <div className="flex h-full w-[120px] items-center gap-1 border-r border-[#1a1a1a] pl-5">
        <ToolButton icon={<Compile />} label="Compile" />
        <button type="button" aria-label="Compile options"><Dots /></button>
      </div>
      <div className="flex h-full w-[89px] items-center border-r border-[#1a1a1a] pl-[13px]">
        <ToolButton icon={<Diff />} label="Diff"><Chevron /></ToolButton>
      </div>
      <div className="flex h-full w-[225px] items-center border-r border-[#1a1a1a] pl-[17px]">
        <ToolButton icon={<Find />} label="Find" />
        <span className="w-5" />
        <ToolButton icon={<HideUnrelated />} label="Hide Unrelated" />
        <button type="button" aria-label="Hide unrelated options" className="ml-[5px]"><Dots /></button>
      </div>
      <div className="flex h-full items-center gap-[23px] pl-4 pr-3">
        <ToolButton icon={<Gear />} label="Class Settings" />
        <ToolButton icon={<Pencil />} label="Class Defaults" />
        <ToolButton icon={<Simulation />} label="Simulation" />
      </div>
      <div className="mr-[19px] h-[30px] w-px bg-[#1a1a1a]" />
      <div className="flex h-[30px] items-center rounded bg-[#383838]">
        <button type="button" aria-label="Play" className="pl-2 text-[#8bd649]"><Svg><path d="M1.500 1l15 9-15 9z" /></Svg></button>
        <button type="button" aria-label="Step" className="pl-2 text-[#7c7c7c]"><Svg><path d="M1 1h2.200v18H1zM4.800 1H7v18H4.800zM8.500 2l8.500 8-8.500 8z" /></Svg></button>
        <button type="button" aria-label="Stop" className="pl-2 text-[#7c7c7c]"><Svg><path d="M2 2.500h14.500v15H2z" /></Svg></button>
        <button type="button" aria-label="Eject" className="pl-2 pr-1.5"><Svg><path d="M4 1l13 9-9 4.500-4 1z" /><path d="M2 17l3-2.500 4 1 4-2h3.500l3 5.500H1z" opacity=".55" /></Svg></button>
        <span className="h-full w-px bg-[#242424]" />
        <button type="button" aria-label="Play options"><Dots /></button>
      </div>
      <div className="ml-3 h-full w-px bg-[#1a1a1a]" />
      <span className="relative ml-4 flex h-[30px] w-[179px] rounded border border-[#363636] bg-[#0f0f0f]">
        <select aria-label="Debug object" className="size-full appearance-none bg-transparent pl-[7px] outline-none">
          <option>No debug object selected</option>
        </select>
        <span className="pointer-events-none absolute inset-y-0 right-2 flex items-center"><Chevron /></span>
      </span>
      <button type="button" aria-label="Browse to debug object" className="ml-1.5 text-[#6a6a6a]"><Browse className="size-[18px]" /></button>
    </div>
  );
}

function TitleBar() {
  return (
    <header className="flex h-14 shrink-0 text-[#c0c0c0]">
      <div className="flex w-[65px] shrink-0 justify-center pr-[9px] pt-1.5">
        <span className="flex size-[42px] items-center justify-center rounded-full border-2 border-[#6e6e6e] bg-[#0c0c0c]">
          <SiUnrealengine className="size-10 text-[#969696]" />
        </span>
      </div>
      <div className="flex min-w-0 flex-1 flex-col justify-between">
        <nav className="flex gap-[23px] pl-[3px] pt-0.5">
          {["File", "Edit", "Asset", "View", "Debug", "Window", "Tools", "Help"].map((m) => (
            <button key={m} type="button" className="h-5">{m}</button>
          ))}
        </nav>
        <div className="flex h-[31px] w-[210px] items-center rounded-t bg-[#242424] pl-2 pr-[13px]">
          <Sphere color="#2d55b0" />
          <span className="ml-2 flex-1 text-white">BP_Settings*</span>
          <button type="button" aria-label="Close BP_Settings" className="text-[#c8c8c8]"><Cross /></button>
        </div>
      </div>
      <div className="flex flex-col items-end pr-4">
        <div className="flex gap-[26px] pt-1 text-[#d0d0d0]">
          <button type="button" aria-label="Minimize"><Svg box={16} className="size-4"><path d="M3 8.500h10" {...stroke} strokeWidth="1.200" /></Svg></button>
          <button type="button" aria-label="Restore"><Svg box={16} className="size-4"><path d="M3.500 5h7v8h-7zM6 5V3h7v7.500h-2.500" {...stroke} strokeWidth="1.100" /></Svg></button>
          <button type="button" aria-label="Close" className="-mr-[3px]"><Svg box={16} className="size-4"><path d="M3 3l10 10M13 3L3 13" {...stroke} strokeWidth="1.400" /></Svg></button>
        </div>
        <p className="mt-3 flex gap-1.5 text-[#787878]">
          Parent class:
          <a href="#actor" className="h-[18px] border-b border-dotted border-[#c8c8c8] text-[#c8c8c8]">Actor</a>
        </p>
      </div>
    </header>
  );
}

function StatusBar() {
  const seg = "flex h-full items-center border-r-2 border-[#171717]";
  return (
    <footer className="mx-px mt-1 flex h-8 shrink-0 items-center bg-[#242424] text-[#c4c4c4]">
      <button type="button" className={`${seg} w-[132px] gap-1 pl-[9px]`}><Browse className="size-4" />Content Drawer</button>
      <button type="button" className={`${seg} w-[104px] gap-1 pl-[9px]`}><LogIcon />Output Log</button>
      <div className={`${seg} w-[400px] pl-3.5`}>
        <button type="button" className="flex items-center gap-1"><CmdIcon />Cmd<Chevron className="ml-1 size-3" /></button>
        <input
          aria-label="Console command"
          placeholder="Enter Console Command"
          className="ml-2 mr-2 h-[22px] min-w-0 flex-1 rounded border border-[#363636] bg-[#0f0f0f] px-2 font-['Liberation_Mono',monospace] text-xs outline-none placeholder:text-[#565656]"
        />
      </div>
      <span className={`${seg} flex-1`} />
      <button type="button" className={`${seg} w-[109px] gap-1.5 pl-3`}><UnsavedIcon />1 Unsaved</button>
      <button type="button" className={`${seg} w-[163px] gap-1 pl-3.5`}><BranchIcon />Revision Control<Chevron /></button>
    </footer>
  );
}

export default function App() {
  return (
    <div className="relative flex h-screen flex-col overflow-hidden bg-[#151515] font-['Roboto',sans-serif] text-[13px] leading-4">
      <TitleBar />
      <Toolbar />
      <div className="flex min-h-0 flex-1 gap-[5px] px-1 pt-1">
        <div className="flex w-[318px] shrink-0 flex-col">
          <ComponentsPanel />
          <MyBlueprintPanel />
        </div>
        <CenterColumn />
        <DetailsPanel />
      </div>
      <StatusBar />
      <svg viewBox="0 0 12 18" className="pointer-events-none absolute left-[1158px] top-0.5 h-[18px] w-3" aria-hidden="true">
        <path d="M.5.500v14l3.300-3 2.300 5.500 2.300-1-2.300-5.200h4.500z" fill="#fff" stroke="#111" strokeWidth=".6" />
      </svg>
    </div>
  );
}
